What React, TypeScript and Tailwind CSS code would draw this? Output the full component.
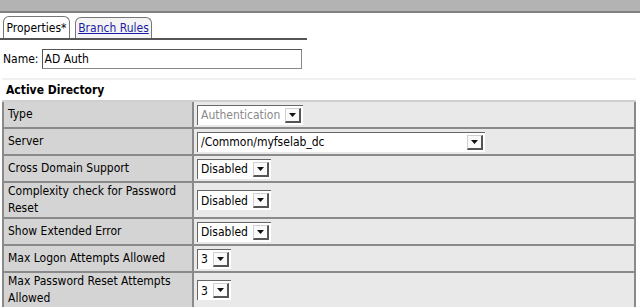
import React from 'react';

const font = { fontFamily: '"DejaVu Sans Condensed", "DejaVu Sans", Verdana, sans-serif' };

interface FakeSelectProps {
  value: string;
  width?: string;
  muted?: boolean;
}

const FakeSelect: React.FC<FakeSelectProps> = ({ value, width, muted }) => (
  <div className={`flex items-stretch h-[20px] bg-white border-l border-t border-[#666] ${width ?? ''}`}>
    <div
      className={`${width ? 'flex-1' : ''} flex items-center pl-[3px] pr-[5px] text-[12px] leading-none whitespace-nowrap ${
        muted ? 'text-[#8a8a8a]' : 'text-black'
      }`}
    >
      {value}
    </div>
    <div className="my-[2px] mr-[2px] w-[16px] flex items-center justify-center bg-[#fafafa] border border-[#d0d0d0] border-r-2 border-b-2 border-r-[#555] border-b-[#555]">
      <svg width="7" height="4" viewBox="0 0 7 4">
        <path d="M0 0 H7 L3.5 4 Z" fill="#111" />
      </svg>
    </div>
  </div>
);

const rows: { label: React.ReactNode; h: string; control: React.ReactNode }[] = [
  { label: 'Type', h: 'h-[27px]', control: <FakeSelect value="Authentication" muted /> },
  { label: 'Server', h: 'h-[27px]', control: <FakeSelect value="/Common/myfselab_dc" width="w-[288px]" /> },
  { label: 'Cross Domain Support', h: 'h-[27px]', control: <FakeSelect value="Disabled" /> },
  {
    label: (
      <>
        Complexity check for Password
        <br />
        Reset
      </>
    ),
    h: 'h-[36px]',
    control: <FakeSelect value="Disabled" />,
  },
  { label: 'Show Extended Error', h: 'h-[27px]', control: <FakeSelect value="Disabled" /> },
  { label: 'Max Logon Attempts Allowed', h: 'h-[27px]', control: <FakeSelect value="3" /> },
  {
    label: (
      <>
        Max Password Reset Attempts
        <br />
        Allowed
      </>
    ),
    h: 'h-[36px]',
    control: <FakeSelect value="3" />,
  },
];

const App: React.FC = () => {
  return (
    <div className="w-[640px] h-[307px] overflow-hidden bg-white text-black" style={font}>
      {/* top strip */}
      <div className="h-[13px] bg-[#b3b3b3] border-b-2 border-[#808080]" />

      {/* tabs */}
      <div className="w-[307px] pl-[3px] pt-[3px] flex items-end gap-[5px] border-b-2 border-[#555]">
        <div className="h-[22px] w-[67px] flex items-center justify-center bg-white border border-b-0 border-[#777] rounded-t-[6px] text-[12px]">
          Properties*
        </div>
        <div className="h-[21px] w-[77px] flex items-center justify-center bg-[#f4f4f4] border border-b-0 border-[#777] rounded-t-[6px] text-[12px] text-[#1c1ca8] underline">
          Branch Rules
        </div>
      </div>

      {/* name */}
      <div className="flex items-center pl-[3px] pt-[8px] h-[29px]">
        <span className="text-[12px] mr-[3px]">Name:</span>
        <div className="w-[260px] h-[20px] flex items-center pl-[2px] text-[12px] bg-white border border-[#888] border-t-[#555] border-l-[#555]">
          AD Auth
        </div>
      </div>

      {/* section header */}
      <div className="mt-[9px] mx-[2px] w-[634px] h-[24px] flex items-center pl-[4px] border-t-2 border-b-2 border-t-[#f0f0f0] border-b-[#d0d0d0] text-[12px] font-bold">
        Active Directory
      </div>

      {/* table */}
      <div className="ml-[2px] w-[634px] border-l-2 border-r-2 border-[#8a8a8a]">
        {rows.map((r, i) => (
          <div key={i} className={`flex ${r.h} border-b-2 border-[#8a8a8a]`}>
            <div className="w-[190px] shrink-0 flex items-center pl-[4px] bg-[#d4d4d4] border-r-2 border-[#8a8a8a] text-[12px] leading-[17px]">
              {r.label}
            </div>
            <div className="flex-1 flex items-center pl-[3px] bg-[#e9e9e9]">{r.control}</div>
          </div>
        ))}
      </div>
    </div>
  );
};

export default App;
